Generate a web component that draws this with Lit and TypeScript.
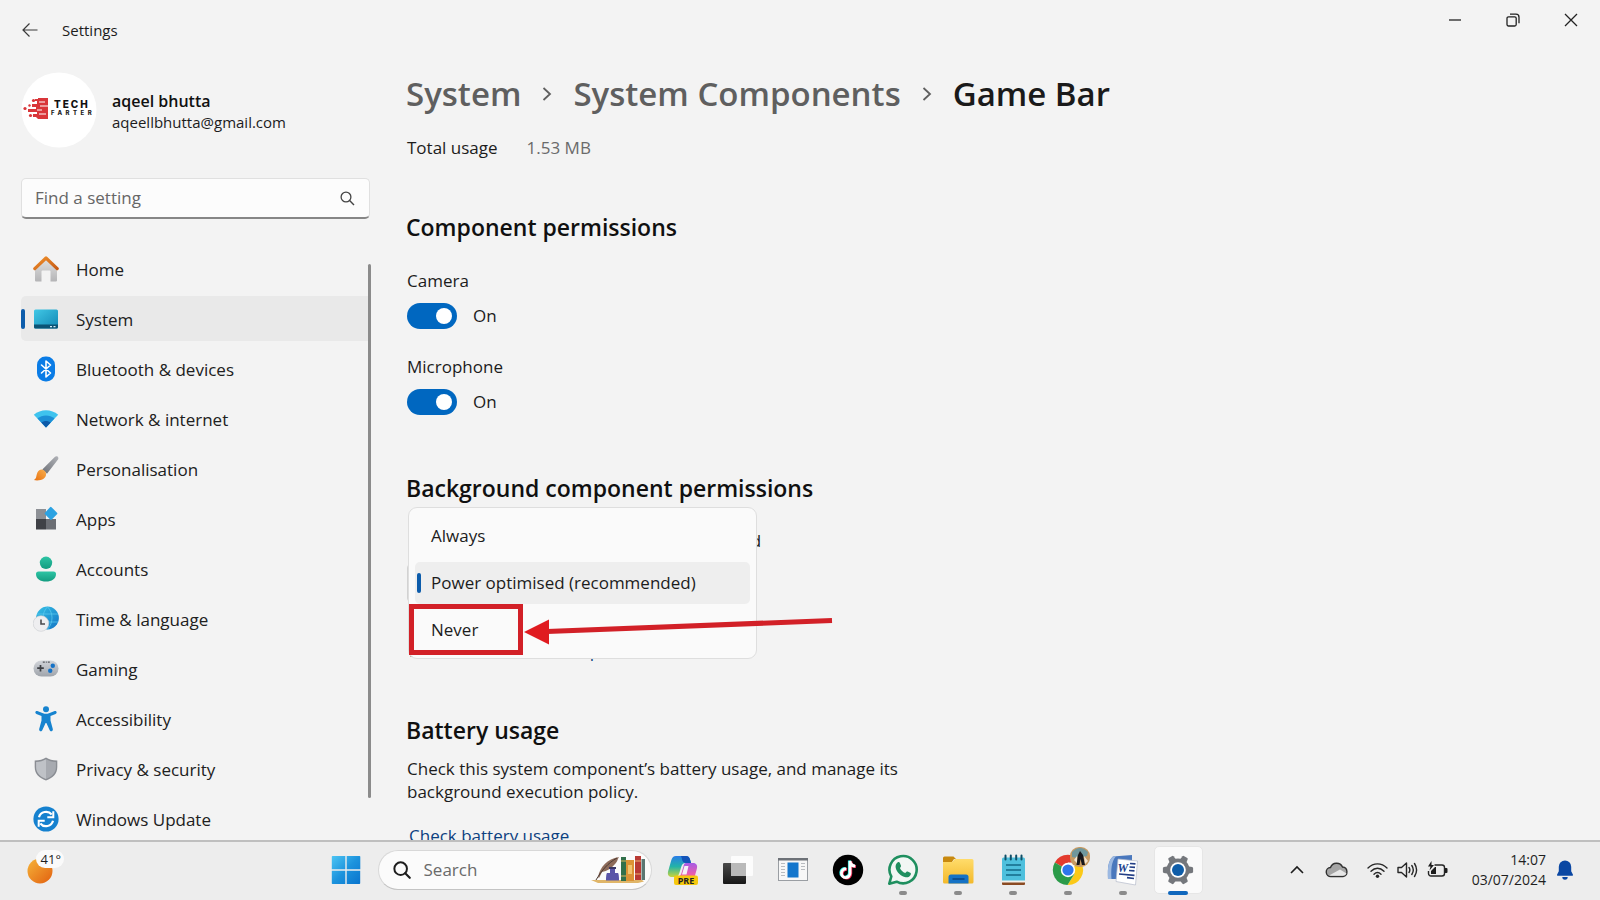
import { LitElement, html, css, svg, TemplateResult } from "lit";
import { customElement, property, state } from "lit/decorators.js";
import { classMap } from "lit/directives/class-map.js";

const navIcons: Record<string, TemplateResult> = {
  home: html`<svg class="ico" viewBox="0 0 26 26" aria-hidden="true">
    <defs>
      <linearGradient id="hb" x1="0" y1="0" x2="0" y2="1"><stop offset="0" stop-color="#e3e3e3" /><stop offset="1" stop-color="#b4b4b6" /></linearGradient>
      <linearGradient id="hr" x1="0" y1="0" x2="1" y2="1"><stop offset="0" stop-color="#f0912c" /><stop offset="1" stop-color="#c65a14" /></linearGradient>
    </defs>
    <path d="M2 12 13 2l11 10v12.500a1 1 0 0 1-1 1h-5.500v-10a1 1 0 0 0-1-1h-7a1 1 0 0 0-1 1v10H3a1 1 0 0 1-1-1z" fill="url(#hb)" />
    <path d="M1.800 12.600 13 2l11.200 10.600" fill="none" stroke="url(#hr)" stroke-width="3.200" stroke-linecap="round" stroke-linejoin="round" />
  </svg>`,
  system: html`<svg class="ico" viewBox="0 0 26 26" aria-hidden="true">
    <defs><linearGradient id="sy" x1="0" y1="0" x2="1" y2="1"><stop offset="0" stop-color="#41c8e6" /><stop offset="1" stop-color="#1187b4" /></linearGradient></defs>
    <rect x="1" y="3.500" width="24" height="19" rx="1.500" fill="url(#sy)" />
    <path d="M1 18.500h24V21a1.500 1.500 0 0 1-1.500 1.500h-21A1.500 1.500 0 0 1 1 21z" fill="#0b5375" />
    <path d="M17 20h2v1.200h-2zM20.500 20h2v1.200h-2z" fill="#d5eef7" />
  </svg>`,
  bluetooth: html`<svg class="ico" viewBox="0 0 26 26" aria-hidden="true">
    <rect x="4" y="0.500" width="18" height="25" rx="8.500" fill="#0a7ce6" />
    <path d="M8.500 9l9 8-4.500 4V5l4.500 4-9 8" fill="none" stroke="#fff" stroke-width="1.600" stroke-linejoin="round" stroke-linecap="round" />
  </svg>`,
  network: html`<svg class="ico" viewBox="0 0 26 26" aria-hidden="true">
    <path d="M.8 8.800C7.500 2.700 18.500 2.700 25.200 8.800L13 21.500z" fill="#3fc3ee" />
    <path d="M4.500 12.600c4.800-4.300 12.200-4.300 17 0L13 21.500z" fill="#1d8fd6" />
    <path d="M8.300 16.600c2.800-2.300 6.600-2.300 9.400 0L13 21.500z" fill="#0c5aa8" />
  </svg>`,
  brush: html`<svg class="ico" viewBox="0 0 26 26" aria-hidden="true">
    <defs>
      <linearGradient id="br" x1="1" y1="0" x2="0" y2="1"><stop offset="0" stop-color="#b1b3b8" /><stop offset="1" stop-color="#6c6f76" /></linearGradient>
      <linearGradient id="bt" x1="1" y1="0" x2="0" y2="1"><stop offset="0" stop-color="#f9b04f" /><stop offset="1" stop-color="#e8700f" /></linearGradient>
    </defs>
    <path d="M24.800.8c1 1 .6 2.200-.2 3.300L14 17.800 9.300 13.600 21.500 1.300c1-.9 2.300-1.400 3.300-.5z" fill="url(#br)" />
    <path d="M8.400 13.400c2.800.2 4.700 2.200 4.700 4.500 0 4.700-5.200 7.400-12.300 6.200 2.600-1.500 2.300-3.200 3-5.900.6-2.700 2.300-4.900 4.600-4.800z" fill="url(#bt)" />
  </svg>`,
  apps: html`<svg class="ico" viewBox="0 0 26 26" aria-hidden="true">
    <rect x="3" y="3" width="10" height="10" fill="#8d9095" />
    <rect x="3" y="13" width="10" height="10.500" fill="#3f4146" />
    <rect x="13" y="13" width="10" height="10.500" fill="#6b6e74" />
    <path d="M18.500 1.200 24 6.700q.8.800 0 1.600l-5.200 5.200q-.8.800-1.600 0L12 8.300q-.8-.8 0-1.600L17 1.200q.8-.8 1.500 0z" fill="#2ba2e2" />
  </svg>`,
  accounts: html`<svg class="ico" viewBox="0 0 26 26" aria-hidden="true">
    <defs><linearGradient id="ac" x1="0" y1="0" x2="0" y2="1"><stop offset="0" stop-color="#2dc4a4" /><stop offset="1" stop-color="#139c80" /></linearGradient></defs>
    <circle cx="13" cy="6.800" r="6.200" fill="url(#ac)" />
    <path d="M5.500 15.500h15A2.500 2.500 0 0 1 23 18c0 4.800-4.200 7.600-10 7.600S3 22.800 3 18a2.500 2.500 0 0 1 2.500-2.500z" fill="url(#ac)" />
  </svg>`,
  time: html`<svg class="ico" viewBox="0 0 26 26" aria-hidden="true">
    <defs><linearGradient id="ti" x1="0" y1="0" x2="1" y2="1"><stop offset="0" stop-color="#37c2e6" /><stop offset="1" stop-color="#1273c4" /></linearGradient></defs>
    <circle cx="14.500" cy="12" r="11.400" fill="url(#ti)" />
    <path d="M4 8h21M4 16h21M14.500.800c-6 6-6 16 0 22.500M14.500.800c6 6 6 16 0 22.500" fill="none" stroke="#5fcdf0" stroke-width=".7" />
    <circle cx="8" cy="17.500" r="7.800" fill="#eeeef0" stroke="#c9ccd0" stroke-width=".6" />
    <path d="M8 13.500V18h4" fill="none" stroke="#4a4a4e" stroke-width="1.600" />
  </svg>`,
  gaming: html`<svg class="ico" viewBox="0 0 26 26" aria-hidden="true">
    <defs><linearGradient id="ga" x1="0" y1="0" x2="0" y2="1"><stop offset="0" stop-color="#d2d5da" /><stop offset="1" stop-color="#9fa4ab" /></linearGradient></defs>
    <rect x=".5" y="4.500" width="25" height="16" rx="8" fill="url(#ga)" />
    <path d="M7.500 9v6.500M4.200 12.200h6.600" stroke="#3d3f44" stroke-width="1.700" />
    <circle cx="19.800" cy="9.800" r="2.200" fill="#1673c7" /><circle cx="17.200" cy="14.800" r="2.200" fill="#1673c7" />
    <path d="M9.800 6.200h2M12.800 6.200h1M14.800 6.200h2" stroke="#55585e" stroke-width="1.200" />
  </svg>`,
  accessibility: html`<svg class="ico" viewBox="0 0 26 26" aria-hidden="true">
    <circle cx="13" cy="3.300" r="3" fill="#1683cf" />
    <path d="M4.300 5.100 10 7.300c2 .7 4 .7 6 0l5.700-2.200c2-.6 2.800 2 .9 2.900L17.500 10v4.500l2.300 8.500c.5 2.300-2.400 3.200-3.200 1L13.400 17h-.8L9.400 24c-.8 2.200-3.700 1.300-3.200-1l2.300-8.500V10L3.400 8c-1.900-.9-1.100-3.500.9-2.900z" fill="#1683cf" />
  </svg>`,
  privacy: html`<svg class="ico" viewBox="0 0 26 26" aria-hidden="true">
    <path d="M13 1.500c3 2 6.500 3 11.300 3V11c0 7-4.500 11-11.300 13.500C6.200 22 1.700 18 1.700 11V4.500C6.500 4.500 10 3.500 13 1.500z" fill="#8a8d93" />
    <path d="M13 3.200c2.800 1.700 6 2.600 9.900 2.700V11c0 6-3.800 9.600-9.900 12z" fill="#a7aab0" />
    <path d="M13 3.200C10.200 4.900 7 5.800 3.100 5.900V11c0 6 3.800 9.600 9.900 12z" fill="#bfc2c7" />
  </svg>`,
  update: html`<svg class="ico" viewBox="0 0 26 26" aria-hidden="true">
    <circle cx="13" cy="13" r="12.600" fill="#1581cf" />
    <path d="M6 11.300A7.300 7.300 0 0 1 18.700 8.500M20 14.700A7.300 7.300 0 0 1 7.300 17.500" fill="none" stroke="#fff" stroke-width="2.200" />
    <path d="M20.300 5.300v6h-6M5.700 20.700v-6h6" fill="none" stroke="#fff" stroke-width="2" />
  </svg>`,
};

const NAV: Array<[string, string]> = [
  ["home", "Home"],
  ["system", "System"],
  ["bluetooth", "Bluetooth & devices"],
  ["network", "Network & internet"],
  ["brush", "Personalisation"],
  ["apps", "Apps"],
  ["accounts", "Accounts"],
  ["time", "Time & language"],
  ["gaming", "Gaming"],
  ["accessibility", "Accessibility"],
  ["privacy", "Privacy & security"],
  ["update", "Windows Update"],
];

@customElement("settings-nav")
class SettingsNav extends LitElement {
  @property() current = "System";

  static styles = css`
    :host { display: flex; flex-direction: column; flex: 1; min-height: 0; }
    .scroller { display: grid; grid-template-columns: 1fr 3px; flex: 1; min-height: 0; overflow: hidden; }
    .list { display: flex; flex-direction: column; gap: 5px; list-style: none; margin: 0; padding: 0; }
    .thumb { width: 3px; height: calc(100% - 61px); margin-top: 18px; border-radius: 2px; background: #8b8b8b; }
    .link {
      display: grid; grid-template-columns: 4px 26px 1fr; align-items: center; height: 45px;
      border-radius: 5px 0 0 5px; color: #202020; text-decoration: none; font-size: 17px; line-height: 24px;
    }
    .mark { width: 4px; height: 20px; border-radius: 2px; }
    .active { background: #e9e9e9; }
    .active .mark { background: #0c5cab; }
    .ico { display: block; width: 26px; height: 26px; margin-left: 8px; }
    .label { padding: 2px 0 0 25px; }
  `;

  render() {
    return html`<div class="scroller">
      <ul class="list">
        ${NAV.map(
          ([icon, label]) => html`<li>
            <a href="#${icon}" class=${classMap({ link: true, active: label === this.current })}>
              <span class="mark"></span>${navIcons[icon]}<span class="label">${label}</span>
            </a>
          </li>`,
        )}
      </ul>
      <div class="thumb"></div>
    </div>`;
  }
}

const taskIcons: Record<string, TemplateResult> = {
  copilot: html`<svg class="t" viewBox="0 0 32 32" aria-hidden="true">
    <defs>
      <linearGradient id="c1" x1="0" y1="0" x2="0" y2="1"><stop offset="0" stop-color="#2a7ce8" /><stop offset=".5" stop-color="#22b3a8" /><stop offset="1" stop-color="#c9d53b" /></linearGradient>
      <linearGradient id="c2" x1="0" y1="0" x2="0" y2="1"><stop offset="0" stop-color="#a45ce6" /><stop offset=".6" stop-color="#ef5fa8" /><stop offset="1" stop-color="#f79a5b" /></linearGradient>
    </defs>
    <path d="M9 2h10c2.500 0 3.500 1.500 4.200 4l.8 3h-5c-3 0-4 1.500-4.800 4l-2 6.500C11.500 22 10 23 7.500 23H5c-3.500 0-4.800-2.500-3.800-6l3-10.500C5.200 3.300 6.500 2 9 2z" fill="url(#c1)" />
    <path d="M14 2h5c2.500 0 3.500 1.500 4.200 4l.8 3h-5c-2.500 0-3.300-1-4-3.500-.3-1.700-.6-2.600-1-3.500z" fill="#1454b8" />
    <path d="M19 9h7c3.500 0 4.800 2.500 3.800 6l-2.500 9c-.8 3-2 5-5 5H13c-2 0-2.700-1-3.300-3.500L9 23c3 0 4.500-1 5.300-3.500l2-6.500c.6-2.500 1-4 2.700-4z" fill="url(#c2)" />
    <path d="M17.500 12h4l-2 8.500h-4.500z" fill="#f6f1f8" />
    <rect x="7" y="21.500" width="24" height="9.500" rx="2" fill="#f6c80d" />
    <text x="19" y="29.500" text-anchor="middle" font-family="Noto Sans, sans-serif" font-weight="700" font-size="9" fill="#222">PRE</text>
  </svg>`,
  desktops: html`<svg class="t" viewBox="0 0 32 32" aria-hidden="true">
    <defs><linearGradient id="tv" x1="0" y1="0" x2="0" y2="1"><stop offset="0" stop-color="#4a4a4a" /><stop offset="1" stop-color="#171717" /></linearGradient></defs>
    <rect x="1" y="9" width="23" height="21" rx="1" fill="url(#tv)" />
    <rect x="9" y="2" width="22" height="20" rx="1" fill="#fff" fill-opacity=".82" />
    <path d="M9 9h15v13H9z" fill="#b9b9b9" />
  </svg>`,
  window: html`<svg class="t" viewBox="0 0 32 32" aria-hidden="true">
    <rect x="1.500" y="4.500" width="29" height="22" fill="#f7f7f7" stroke="#9a9ea3" /><path d="M1 4h30v2.500H1z" fill="#6d7177" />
    <rect x="10.500" y="8.500" width="11" height="15" fill="#1476cc" />
    <path d="M4 9.500h4M4 12.500h4M4 15.500h4M4 18.500h4M4 21.500h4M24 9.500h4M24 12.500h4M24 15.500h4" stroke="#b9bcc0" />
  </svg>`,
  tiktok: html`<svg class="t" viewBox="0 0 32 32" aria-hidden="true">
    <circle cx="16" cy="16" r="15.200" fill="#000" />
    <g fill="none" stroke-width="2.800">
      <path d="M13.500 14.500a4.300 4.300 0 1 0 3.800 4.300V6.500c.3 3 2.300 5 5.200 5.200" stroke="#25e6e0" />
      <path d="M15 15.500a4.300 4.300 0 1 0 3.800 4.300V7.500c.3 3 2.300 5 5.200 5.200" stroke="#f5305a" />
      <path d="M14.200 15a4.300 4.300 0 1 0 3.800 4.300V7c.3 3 2.300 5 5.200 5.200" stroke="#fff" />
    </g>
  </svg>`,
  whatsapp: html`<svg class="t" viewBox="0 0 32 32" aria-hidden="true">
    <path d="M2.300 29.700l2-7.200A13.600 13.600 0 1 1 9.700 27.700z" fill="#f2f7f4" stroke="#1f8f5f" stroke-width="2.600" stroke-linejoin="round" />
    <path d="M10.500 8.500c1-.8 2-.4 2.400.6l1 2.400c.3.700.1 1.200-1 2.500 1.200 2.400 2.900 4 5.300 5.100 1.200-1.500 1.700-1.900 2.500-1.500l2.500 1.200c.8.400.8 1 .5 1.900-.8 2-3 2.900-5 2.500-5-1-9-5-10-9.500-.4-2 .3-4.100 1.800-5.200z" fill="#1f8f5f" />
  </svg>`,
  folder: html`<svg class="t" viewBox="0 0 32 32" aria-hidden="true">
    <defs><linearGradient id="fo" x1="0" y1="0" x2="0" y2="1"><stop offset="0" stop-color="#ffdc6b" /><stop offset="1" stop-color="#f3b92b" /></linearGradient></defs>
    <path d="M1 4a1.500 1.500 0 0 1 1.500-1.500h9L14 5h-2l-2 3H1z" fill="#c8890f" />
    <path d="M1 8h9l3-3h17a1.500 1.500 0 0 1 1.500 1.500V28a1.500 1.500 0 0 1-1.500 1.500H2.500A1.500 1.500 0 0 1 1 28z" fill="url(#fo)" />
    <path d="M6.500 29.500V23a2.500 2.500 0 0 1 2.500-2.500h15a2.500 2.500 0 0 1 2.500 2.500v6.500z" fill="#1572c5" /><path d="M10.500 25h12" stroke="#0a4685" stroke-width="1.600" />
  </svg>`,
  notepad: html`<svg class="t" viewBox="0 0 32 32" aria-hidden="true">
    <path d="M5 27h23v3a1 1 0 0 1-1 1H6a1 1 0 0 1-1-1z" fill="#8a4a22" /><path d="M5 25.500h23v3H5z" fill="#f5f1ea" />
    <path d="M5 5a1.500 1.500 0 0 1 1.500-1.500h20A1.500 1.500 0 0 1 28 5v21.500H5z" fill="#4ec0dd" />
    <path d="M8.500 1.500v4M13.800 1.500v4M19.200 1.500v4M24.500 1.500v4" stroke="#0e4f68" stroke-width="2" stroke-linecap="round" />
    <path d="M9 11h15M9 16h15M9 21h15" stroke="#156a88" stroke-width="1.500" />
  </svg>`,
  chrome: html`<svg class="t" viewBox="0 0 32 32" aria-hidden="true">
    <path d="M16 16 2.800 8.500A15 15 0 0 1 29 8.500H16z" fill="#e33b2e" />
    <path d="M16 16 29 8.500A15 15 0 0 1 15.500 31l7-11z" fill="#fbc918" />
    <path d="M16 16l6.500 3.800-7 11.200A15 15 0 0 1 2.800 8.500z" fill="#2b9b49" />
    <circle cx="16" cy="16" r="7.200" fill="#fff" /><circle cx="16" cy="16" r="5.600" fill="#2f76ec" />
  </svg>`,
  word: html`<svg class="t" viewBox="0 0 32 32" aria-hidden="true">
    <path d="M6 2.500 25 1v24L1 25C.5 14 1 7 6 2.500z" fill="#4a78bd" /><path d="M1 25C.5 14 1 7 6 2.500l3-.3C4 8 4 16 4.500 25z" fill="#9cb9e2" />
    <path d="M11 5l19.500 2-2 24-19.500-3.500z" fill="#fff" stroke="#b6bccb" stroke-width=".7" />
    <text x="10.500" y="18" font-family="Liberation Serif, serif" font-weight="700" font-style="italic" font-size="12" fill="#1d418c">W</text>
    <path d="M23 9.500l5.500.4M22.500 13l5.500.4M22 16.500l5.500.4M12 20l15.500 1.400M20 23.700l7 .8" stroke="#243f86" stroke-width="1.700" />
  </svg>`,
  gear: html`<svg class="t" viewBox="0 0 32 32" aria-hidden="true">
    <g fill="#74777c">
      <circle cx="16" cy="16" r="11.500" />
      ${[30, 90, 150, 210, 270, 330].map((a) => svg`<path d="M12.300 6.500 13 1.800q.3-.8 1-.9h4q.7.1 1 .9l.7 4.700z" transform="rotate(${a} 16 16)" />`)}
    </g>
    <circle cx="16" cy="16" r="7.800" fill="#fff" /><circle cx="16" cy="16" r="6" fill="#0f5da8" />
  </svg>`,
};

const TASKS: Array<[string, string, string]> = [
  ["copilot", "Copilot", ""],
  ["desktops", "Task view", ""],
  ["window", "System window", ""],
  ["tiktok", "TikTok", ""],
  ["whatsapp", "WhatsApp", "open"],
  ["folder", "File Explorer", "open"],
  ["notepad", "Notepad", "open"],
  ["chrome", "Chrome", "open"],
  ["word", "Word", "open"],
  ["gear", "Settings", "focused"],
];

@customElement("task-bar")
class TaskBar extends LitElement {
  static styles = css`
    :host {
      display: grid; grid-template-columns: 4fr auto 5fr; align-items: center; box-sizing: border-box; height: 60px; padding: 0 0 2px 3px;
      border-top: 2px solid #bfbfbf; background: #ededed; color: #1f1f1f;
    }
    button { border: 0; padding: 0; margin: 0; background: none; font: inherit; color: inherit; }
    .weather { display: flex; position: relative; width: 38px; height: 36px; margin-left: 23px; }
    .sun { width: 38px; height: 36px; }
    .temp {
      position: absolute; top: -2px; right: 0; padding: 0 3px 0 5px; border-radius: 10px; background: #fafafa;
      font-size: 13px; line-height: 18px;
    }
    .apps { display: flex; align-items: center; }
    .start { display: grid; place-items: center; width: 55px; height: 48px; }
    .logo { width: 30px; height: 30px; }
    .search {
      display: flex; align-items: center; box-sizing: border-box; width: 274px; height: 40px; padding: 0 5px 0 14px; gap: 13px; margin: 0 4px;
      border: 1px solid #d8d8d8; border-bottom-color: #c4c4c4; border-radius: 20px; background: #fbfbfb;
    }
    .lens { width: 18px; height: 18px; flex: none; }
    .art { width: 56px; height: 28px; flex: none; }
    .query {
      flex: 1; min-width: 0; border: 0; padding: 0; background: none; font: inherit; font-size: 17px; line-height: 24px; outline: 0;
    }
    .query::placeholder { color: #6a6a6a; opacity: 1; }
    .app { display: grid; place-items: center; position: relative; width: 55px; height: 48px; }
    .t { display: block; width: 32px; height: 32px; }
    .focused::before { content: ""; position: absolute; inset: 0 3px; border-radius: 5px; background: #fafafa; border: 1px solid #e6e6e6; }
    .focused .t { position: relative; }
    .open::after, .focused::after {
      content: ""; position: absolute; bottom: -1px; left: 50%; width: 8px; height: 4px; margin-left: -4px; border-radius: 2px; background: #8b8b8b;
    }
    .focused::after { width: 20px; margin-left: -10px; background: #0f67bd; }
    .badge { position: absolute; top: 1px; right: 6px; width: 20px; height: 20px; }
    .tray { display: flex; align-items: center; justify-content: flex-end; padding-right: 26px; }
    .tray svg { display: block; }
    .up { margin-right: 20px; }
    .cloud { margin-right: 18px; }
    .status { display: flex; align-items: center; gap: 9px; margin-right: 24px; }
    .clock { display: flex; flex-direction: column; align-items: flex-end; font-size: 14px; line-height: 20px; margin-right: 10px; }
  `;

  render() {
    return html`
      <button class="weather" aria-label="Weather">
        <svg class="sun" viewBox="0 0 38 36" aria-hidden="true">
          <defs><linearGradient id="sn" x1="0" y1="0" x2="1" y2="1"><stop offset="0" stop-color="#f6b43a" /><stop offset="1" stop-color="#e2600f" /></linearGradient></defs>
          <circle cx="14" cy="19" r="12.500" fill="url(#sn)" />
        </svg>
        <span class="temp">41°</span>
      </button>
      <div class="apps">
        <button class="start" aria-label="Start">
          <svg class="logo" viewBox="0 0 30 30" aria-hidden="true">
            <defs><linearGradient id="wn" gradientUnits="userSpaceOnUse" x1="0" y1="0" x2="30" y2="30"><stop offset="0" stop-color="#50c8f5" /><stop offset=".5" stop-color="#1c93dd" /><stop offset="1" stop-color="#0872cc" /></linearGradient></defs>
            <path d="M1.500 1H14.300v13.300H.8V1.800A.8.800 0 0 1 1.500 1zM15.700 1h12.800a.8.800 0 0 1 .8.800v12.500H15.700zM.8 15.700h13.500V29H1.500a.8.800 0 0 1-.7-.8zM15.700 15.700h13.500v12.500a.8.800 0 0 1-.8.800H15.700z" fill="url(#wn)" />
          </svg>
        </button>
        <label class="search">
          <svg class="lens" viewBox="0 0 20 20" aria-hidden="true"><circle cx="8.500" cy="8.500" r="7" fill="none" stroke="#1d1d1d" stroke-width="2.200" /><path d="M13.600 13.600 18.600 18.600" stroke="#1d1d1d" stroke-width="2.400" stroke-linecap="round" /></svg>
          <input class="query" type="text" placeholder="Search" aria-label="Search" />
          <svg class="art" viewBox="0 0 56 28" aria-hidden="true">
            <path d="M1 24h51l2 1.500-6 1.500H8z" fill="#e0b669" />
            <path d="M8 21C10 11 17 3 29 1c-2 3-1 4-4 7-3 4-8 7-13 8l-3 6z" fill="#8d6b5a" /><path d="M6 24C12 14 18 7 27 2" fill="none" stroke="#4b3a33" />
            <path d="M17 17h3v-4h5v4h3q1 1 1 7.500H16Q16 18 17 17z" fill="#5a55a8" /><path d="M19 11h7v2h-7z" fill="#383565" />
            <path d="M31 1h5v24h-5z" fill="#31704b" /><path d="M31 5h5M31 20h5" stroke="#d9b45b" />
            <path d="M36 4h8v21h-8z" fill="#dc9336" /><path d="M38 9h4v9h-4z" fill="#f2c46e" />
            <path d="M45 0h6v24h-6z" fill="#b93a34" /><path d="M45 5h6M45 18h6" stroke="#eab06b" />
            <path d="M51.500 3H55v21h-3.500z" fill="#5b7772" />
          </svg>
        </label>
        ${TASKS.map(
          ([icon, label, mode]) => html`<button class=${classMap({ app: true, open: mode === "open", focused: mode === "focused" })} aria-label=${label}>
            ${taskIcons[icon]}
            ${icon === "chrome"
              ? html`<svg class="badge" viewBox="0 0 20 20" aria-hidden="true">
                  <rect width="20" height="20" rx="9" fill="#c79a62" /><path d="M2 5Q10-3 18 5l-1 4-4 1-3-5-3 6-5-1z" fill="#6f979c" />
                  <path d="M6.500 18 8 8l2-4 3 4 2 10h-3l-1.500-6L9.500 18z" fill="#17171b" /><path d="M4 13l3-4v7zM14 9l4 5-3 3z" fill="#f3e4cf" />
                </svg>`
              : ""}
          </button>`,
        )}
      </div>
      <div class="tray">
        <button class="up" aria-label="Show hidden icons">
          <svg width="16" height="16" viewBox="0 0 16 16" aria-hidden="true"><path d="M2 11l6-6 6 6" fill="none" stroke="#1d1d1d" stroke-width="1.600" /></svg>
        </button>
        <svg class="cloud" width="24" height="18" viewBox="0 0 24 18" aria-hidden="true">
          <path d="M6 15.500a4.500 4.500 0 0 1-.5-9A6.500 6.500 0 0 1 17.500 6a4.800 4.800 0 0 1 .5 9.500z" fill="#a5a5a5" stroke="#303030" stroke-width="1.400" />
          <path d="M4 14.500 15 8.500l6.500 4q-1 2.300-3.500 2.300H6z" fill="#e7e7e7" />
        </svg>
        <div class="status">
          <svg width="21" height="18" viewBox="0 0 21 18" aria-hidden="true">
            <path d="M1 7C6.500 1.500 14.500 1.500 20 7M4 10.300c4-4 9-4 13 0M7 13.200c2.300-2.200 4.700-2.200 7 0" fill="none" stroke="#262626" stroke-width="1.400" stroke-linecap="round" /><circle cx="10.500" cy="15.300" r="1.700" fill="#262626" />
          </svg>
          <svg width="21" height="18" viewBox="0 0 21 18" aria-hidden="true">
            <path d="M1 6.500h3.500L9.500 2v14l-5-4.500H1z" fill="none" stroke="#262626" stroke-width="1.400" stroke-linejoin="round" />
            <path d="M12 6.500q1.700 2.500 0 5M14.800 4.500q3 4.500 0 9M17.500 2.500q4.200 6.500 0 13" fill="none" stroke="#262626" stroke-width="1.400" stroke-linecap="round" />
          </svg>
          <svg width="21" height="18" viewBox="0 0 21 18" aria-hidden="true">
            <path d="M7.500 4H15a2.500 2.500 0 0 1 2.500 2.500v6A2.500 2.500 0 0 1 15 15H4a2.500 2.500 0 0 1-2.500-2.500V10" fill="none" stroke="#262626" stroke-width="1.400" />
            <path d="M18 7h1.500q1 0 1 1v3q0 1-1 1H18zM4 13V10l4-4h1v7zM4.500 0 1 5.500h2.500L2.500 9.500 7 4H4.500z" fill="#1c1c1c" />
          </svg>
        </div>
        <div class="clock"><span>14:07</span><span>03/07/2024</span></div>
        <svg width="18" height="20" viewBox="0 0 18 20" aria-hidden="true">
          <path d="M9 .5a6.200 6.200 0 0 1 6.200 6.200v4.500l1.800 3.600q.3 1-.8 1H1.800q-1.100 0-.8-1l1.800-3.600V6.700A6.200 6.200 0 0 1 9 .5zM6.300 17h5.400a2.700 2.700 0 0 1-5.400 0z" fill="#0a47a3" />
        </svg>
      </div>
    `;
  }
}

@customElement("app-root")
class AppRoot extends LitElement {
  @state() private choice = "Power optimised (recommended)";

  static styles = css`
    :host {
      display: flex; flex-direction: column; height: 100vh; overflow: hidden; background: #f3f3f3; color: #1c1c1c;
      font-family: "Open Sans", "Noto Sans", sans-serif; font-size: 17px; line-height: 24px;
    }
    button { border: 0; padding: 0; margin: 0; background: none; font: inherit; color: inherit; }
    h1, h2, p { margin: 0; }
    a { color: inherit; text-decoration: none; }
    .bar { display: flex; align-items: center; height: 60px; flex: none; }
    .back { display: grid; place-items: center; width: 32px; height: 32px; margin-left: 14px; }
    .app-name { margin-left: 16px; font-size: 15px; }
    .controls { display: flex; align-self: flex-start; margin-left: auto; }
    .control { display: grid; place-items: center; width: 58px; height: 40px; }
    .body { display: grid; grid-template-columns: 371px 1fr; column-gap: 35px; flex: 1; min-height: 0; }
    .side { display: flex; flex-direction: column; min-height: 0; padding-left: 21px; }
    .profile { display: flex; align-items: center; gap: 15px; margin-top: 12px; }
    .avatar { width: 76px; height: 76px; }
    .who { display: flex; flex-direction: column; padding-top: 2px; }
    .name { font-size: 16px; font-weight: 600; line-height: 22px; color: #101010; }
    .mail { font-size: 15px; line-height: 20px; }
    .find {
      display: flex; align-items: center; box-sizing: border-box; height: 41px; margin: 30px 1px 27px 0; padding: 0 14px 0 13px;
      border: 1px solid #e0e0e0; border-bottom: 2px solid #868686; border-radius: 5px; background: #fcfcfc;
    }
    .find-input { flex: 1; min-width: 0; border: 0; padding: 0; background: none; outline: 0; font: inherit; }
    .find-input::placeholder { color: #666; opacity: 1; }
    .main { overflow: hidden; padding: 10px 24px 0 0; }
    .crumbs { display: flex; align-items: center; font-size: 33px; font-weight: 600; line-height: 48px; color: #5f5f5f; }
    .crumbs h1 { font: inherit; color: #1a1a1a; }
    .chev { width: 12px; height: 16px; margin: 0 20px; }
    .usage { display: flex; gap: 29px; margin-top: 18px; padding-left: 1px; }
    .amount { color: #6a6a6a; }
    h2 { font-size: 23px; font-weight: 600; line-height: 32px; color: #101010; }
    .section { margin-top: 51px; }
    .perm { display: flex; flex-direction: column; gap: 10px; margin-top: 26px; padding-left: 1px; }
    .row { display: flex; align-items: center; gap: 16px; height: 26px; }
    .toggle {
      appearance: none; display: flex; align-items: center; justify-content: flex-end; box-sizing: border-box; width: 50px; height: 26px; margin: 0;
      padding-right: 5px; border-radius: 13px; background: #0067c0;
    }
    .toggle::before { content: ""; width: 16px; height: 16px; border-radius: 50%; background: #fff; }
    .toggle:not(:checked) { justify-content: flex-start; padding-left: 5px; background: #8a8a8a; }
    .background { margin-top: 57px; }
    .field { display: flex; flex-direction: column; align-items: flex-start; gap: 10px; position: relative; margin-top: 25px; padding-left: 1px; }
    .policy {
      box-sizing: border-box; width: 350px; height: 40px; padding: 0 10px; border: 1px solid #d2d2d2; border-radius: 5px; background: #fbfbfb;
      font: inherit; color: inherit; appearance: none;
    }
    .more { color: #0b3f7d; margin-top: 26px; padding-left: 2px; }
    .menu {
      position: absolute; top: -22px; left: 2px; box-sizing: border-box; width: 349px; padding: 7px 6px; border: 1px solid #dedede; border-radius: 9px;
      background: #fafafa; display: flex; flex-direction: column; gap: 5px;
    }
    .option { display: flex; align-items: center; gap: 10px; height: 42px; border-radius: 5px; padding-left: 2px; text-align: left; }
    .pip { width: 4px; height: 20px; border-radius: 2px; }
    .chosen { background: #eee; }
    .chosen .pip { background: #0c5cab; }
    .callout { position: absolute; top: 75px; left: 3px; box-sizing: border-box; width: 114px; height: 51px; border: 5px solid #d22027; }
    .arrow { position: absolute; top: 85px; left: 117px; width: 312px; height: 32px; }
    .battery { margin-top: 51px; }
    .text { max-width: 500px; margin-top: 11px; padding-left: 1px; line-height: 23px; }
    .check { display: inline-block; margin: 21px 0 0 3px; color: #0b4080; }
  `;

  private option(label: string) {
    const on = label === this.choice;
    return html`<button class=${classMap({ option: true, chosen: on })} role="option" aria-selected=${on} @click=${() => (this.choice = label)}>
      <span class="pip"></span><span>${label}</span>
    </button>`;
  }

  private permission(id: string, label: string) {
    return html`<div class="perm">
      <label for=${id}>${label}</label>
      <div class="row"><input id=${id} class="toggle" type="checkbox" role="switch" checked /><span>On</span></div>
    </div>`;
  }

  render() {
    const chevron = html`<svg class="chev" viewBox="0 0 12 16" aria-hidden="true"><path d="M2.500 2 9 8l-6.500 6" fill="none" stroke="#5f5f5f" stroke-width="1.800" /></svg>`;
    const options = ["Always", "Power optimised (recommended)", "Never"];
    return html`
      <header class="bar">
        <button class="back" aria-label="Back">
          <svg width="16" height="16" viewBox="0 0 16 16" aria-hidden="true"><path d="M15.500 8H1M7.500 1.500 1 8l6.500 6.500" fill="none" stroke="#3a3a3a" stroke-width="1.200" /></svg>
        </button>
        <span class="app-name">Settings</span>
        <div class="controls">
          <button class="control" aria-label="Minimise"><svg width="14" height="14" viewBox="0 0 14 14" aria-hidden="true"><path d="M1 7h12" stroke="#222" stroke-width="1.300" /></svg></button>
          <button class="control" aria-label="Restore"><svg width="14" height="14" viewBox="0 0 14 14" aria-hidden="true"><rect x="1" y="3.800" width="9.200" height="9.200" rx="1.500" fill="none" stroke="#222" stroke-width="1.300" /><path d="M4 1.200h6A3 3 0 0 1 13 4.200v6" fill="none" stroke="#222" stroke-width="1.300" /></svg></button>
          <button class="control" aria-label="Close"><svg width="14" height="14" viewBox="0 0 14 14" aria-hidden="true"><path d="M1 1l12 12M13 1 1 13" stroke="#222" stroke-width="1.300" /></svg></button>
        </div>
      </header>
      <div class="body">
        <aside class="side">
          <div class="profile">
            <svg class="avatar" viewBox="0 0 76 76" role="img" aria-label="Tech Farter">
              <circle cx="38" cy="38" r="37.500" fill="#fff" />
              <g fill="#d9363a">
                <path d="M17 26h10v21H17l-2-2h-3v-3h4v-2H7v-3h8v-2h-4v-3h5v-3h-2v-2h3z" />
                <circle cx="12.500" cy="28.500" r="1.600" /><circle cx="4" cy="36.500" r="1.600" /><circle cx="9.500" cy="43.500" r="1.600" /><circle cx="8.500" cy="33.500" r="1.200" />
              </g>
              <path d="M18 30h6M19 34h8M16 38h5M18 42h7" stroke="#fff" stroke-width="1" />
              <text x="33" y="36" font-family="Inter, sans-serif" font-weight="800" font-size="10" letter-spacing="2" fill="#111">TECH</text>
              <text x="30" y="43" font-family="Inter, sans-serif" font-weight="800" font-size="6" letter-spacing="3.500" fill="#222">FARTER</text>
            </svg>
            <div class="who"><span class="name">aqeel bhutta</span><span class="mail">aqeellbhutta@gmail.com</span></div>
          </div>
          <label class="find">
            <input class="find-input" type="text" placeholder="Find a setting" aria-label="Find a setting" />
            <svg width="15" height="15" viewBox="0 0 15 15" aria-hidden="true"><circle cx="6" cy="6" r="4.900" fill="none" stroke="#444" stroke-width="1.300" /><path d="M9.600 9.600 14 14" stroke="#444" stroke-width="1.400" /></svg>
          </label>
          <settings-nav current="System"></settings-nav>
        </aside>
        <main class="main">
          <nav class="crumbs" aria-label="Breadcrumb"><a href="#system">System</a>${chevron}<a href="#components">System Components</a>${chevron}<h1>Game Bar</h1></nav>
          <div class="usage"><span>Total usage</span><span class="amount">1.53 MB</span></div>
          <section class="section">
            <h2>Component permissions</h2>
            ${this.permission("camera", "Camera")} ${this.permission("microphone", "Microphone")}
          </section>
          <section class="background">
            <h2>Background component permissions</h2>
            <div class="field">
              <label for="policy">Let this active component run in background</label>
              <select id="policy" class="policy" .value=${this.choice}>
                ${options.map((o) => html`<option ?selected=${o === this.choice}>${o}</option>`)}
              </select>
              <a class="more" href="#permissions">Learn more about this permission</a>
              <div class="menu" role="listbox" aria-label="Background permission">${options.map((o) => this.option(o))}</div>
              <div class="callout"></div>
              <svg class="arrow" viewBox="0 0 312 32" aria-hidden="true"><path d="M24 17.500 309 6.500" stroke="#d22027" stroke-width="5" /><path d="M1 18 26 5.500v25z" fill="#e01b20" /></svg>
            </div>
          </section>
          <section class="battery">
            <h2>Battery usage</h2>
            <p class="text">Check this system component’s battery usage, and manage its background execution policy.</p>
            <a class="check" href="#battery">Check battery usage</a>
          </section>
        </main>
      </div>
      <task-bar></task-bar>
    `;
  }
}
